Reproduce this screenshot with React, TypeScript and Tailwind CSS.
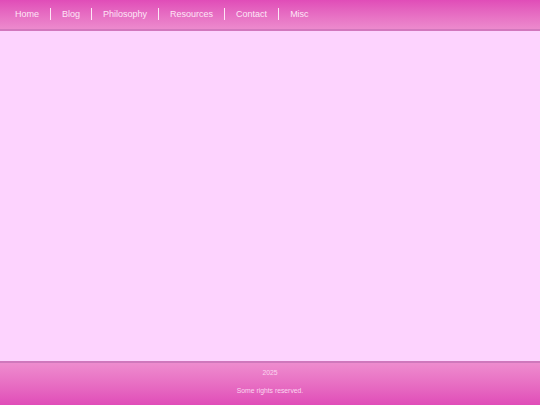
const NAV_ITEMS = ['Home', 'Blog', 'Philosophy', 'Resources', 'Contact', 'Misc']

export default function App() {
  return (
    <div className="flex h-[405px] w-[540px] flex-col bg-[#fdd3fe] font-['Liberation_Sans',Arial,sans-serif]">
      {/* header */}
      <header className="h-[31px] shrink-0 border-b-2 border-[#d277bd] bg-gradient-to-b from-[#e04cb8] to-[#ec8acd]">
        <nav className="flex h-[27px] items-center pl-1">
          {NAV_ITEMS.map((item, i) => (
            <span
              key={item}
              className={
                'px-[11px] text-[9px] leading-[12px] text-[#fde6f6] ' +
                (i < NAV_ITEMS.length - 1 ? 'border-r border-[#fde6f6]' : '')
              }
            >
              {item}
            </span>
          ))}
        </nav>
      </header>

      {/* content */}
      <main className="flex-1" />

      {/* footer */}
      <footer className="flex h-[44px] shrink-0 flex-col items-center border-t-2 border-[#cf78bc] bg-gradient-to-b from-[#ee8cce] to-[#e04cb8] pt-[5px] text-[6.8px] text-[#fbd6f0]">
        <p className="leading-[10px]">2025</p>
        <p className="mt-[8px] leading-[10px]">Some rights reserved.</p>
      </footer>
    </div>
  )
}
